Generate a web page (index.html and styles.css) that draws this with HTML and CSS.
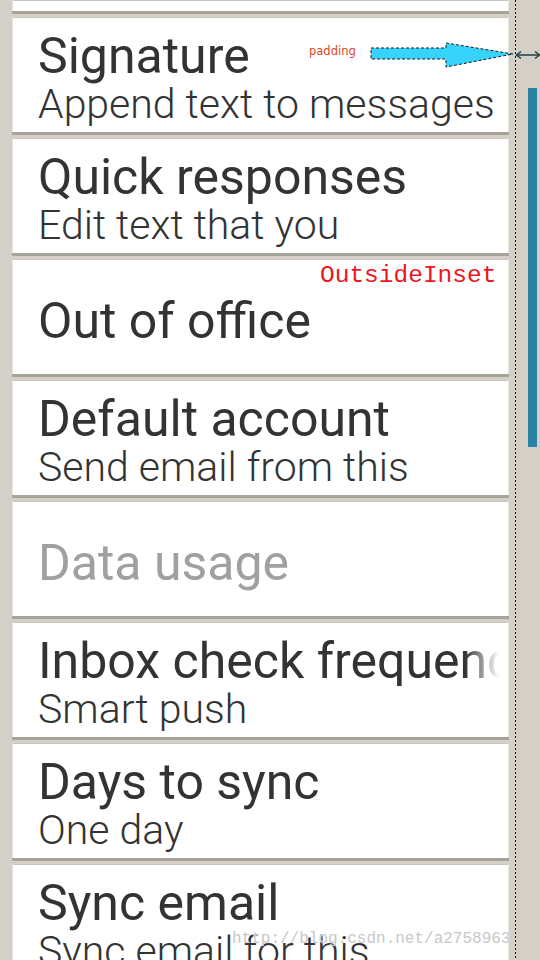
FILE: index.html
```html
<!DOCTYPE html>
<html>
<head>
<meta charset="utf-8">
<link rel="stylesheet" href="styles.css">
</head>
<body>
<div class="screen">
  <div class="list">
    <div class="card card-partial"></div>
    <div class="card">
      <div class="title">Signature</div>
      <div class="summary">Append text to messages</div>
    </div>
    <div class="card">
      <div class="title">Quick responses</div>
      <div class="summary">Edit text that you</div>
    </div>
    <div class="card">
      <div class="title">Out of office</div>
    </div>
    <div class="card">
      <div class="title">Default account</div>
      <div class="summary">Send email from this</div>
    </div>
    <div class="card">
      <div class="title disabled">Data usage</div>
    </div>
    <div class="card">
      <div class="title fade">Inbox check frequency</div>
      <div class="summary">Smart push</div>
    </div>
    <div class="card">
      <div class="title">Days to sync</div>
      <div class="summary">One day</div>
    </div>
    <div class="card">
      <div class="title">Sync email</div>
      <div class="summary">Sync email for this</div>
    </div>
  </div>

  <div class="guide"></div>
  <div class="scrollbar"></div>

  <div class="note-padding">padding</div>
  <svg class="arrow" width="146" height="28" viewBox="0 0 146 28">
    <polygon points="1,6 76,6 76,1 143,12 76,25 76,17 1,17" fill="#38d3fb" stroke="#1a1a1a" stroke-width="1" stroke-dasharray="3,2"/>
  </svg>
  <svg class="dbl-arrow" width="26" height="10" viewBox="0 0 26 10">
    <line x1="2" y1="5" x2="24" y2="5" stroke="#1f3f4a" stroke-width="1.5"/>
    <polyline points="6,1.5 1.5,5 6,8.5" fill="none" stroke="#1f3f4a" stroke-width="1.5"/>
    <polyline points="20,1.5 24.5,5 20,8.5" fill="none" stroke="#1f3f4a" stroke-width="1.5"/>
  </svg>
  <div class="note-inset">OutsideInset</div>
  <div class="watermark">http://blog.csdn.net/a2758963</div>
</div>
</body>
</html>
```

FILE: styles.css
```css
html, body {
  margin: 0;
  padding: 0;
  background: #d4d0c8;
}

.screen {
  position: relative;
  width: 540px;
  height: 960px;
  overflow: hidden;
  background: #d4d0c8;
  font-family: Roboto, "Noto Sans", sans-serif;
}

.list {
  display: flex;
  flex-direction: column;
  width: 497px;
  margin-left: 12px;
}

.card {
  box-sizing: border-box;
  height: 115px;
  background: #ffffff;
  border-left: 1px solid #e6e4df;
  border-right: 1px solid #e6e4df;
  padding: 8px 9px 0 25px;
  display: flex;
  flex-direction: column;
  justify-content: center;
  overflow: hidden;
  margin-bottom: 6px;
  box-shadow: 0 3px 0 #a6a39b, 0 1px 0 #c9c6bf inset;
}

.card-partial {
  height: 11px;
  padding: 0;
}

.title {
  font-size: 50px;
  line-height: 50px;
  font-weight: 400;
  color: #333333;
  white-space: nowrap;
}

.title.disabled {
  color: #a0a0a0;
}

.title.fade {
  overflow: hidden;
  -webkit-mask-image: linear-gradient(to right, #000 calc(100% - 34px), transparent);
  mask-image: linear-gradient(to right, #000 calc(100% - 34px), transparent);
}

.summary {
  font-size: 41px;
  line-height: 45px;
  font-weight: 300;
  color: #333333;
  margin-top: 1px;
  white-space: nowrap;
}

.guide {
  position: absolute;
  left: 515px;
  top: 0;
  width: 1px;
  height: 960px;
  background: repeating-linear-gradient(to bottom, #111 0 2px, transparent 2px 4px);
}

.scrollbar {
  position: absolute;
  left: 528px;
  top: 88px;
  width: 9px;
  height: 359px;
  background: #2a83a6;
}

.note-padding {
  position: absolute;
  left: 309px;
  top: 44px;
  font-family: "DejaVu Sans", sans-serif;
  font-size: 11.5px;
  color: #e0451f;
}

.arrow {
  position: absolute;
  left: 370px;
  top: 42px;
}

.dbl-arrow {
  position: absolute;
  left: 515px;
  top: 50px;
}

.note-inset {
  position: absolute;
  left: 320px;
  top: 262px;
  font-family: "Liberation Mono", monospace;
  font-size: 24.5px;
  line-height: 28px;
  color: #f0141e;
}

.watermark {
  position: absolute;
  left: 232px;
  top: 930px;
  font-family: "Liberation Mono", monospace;
  font-size: 16px;
  line-height: 18px;
  color: #c8c8c8;
  text-shadow: 0 0 1px #ffffff;
}
```
